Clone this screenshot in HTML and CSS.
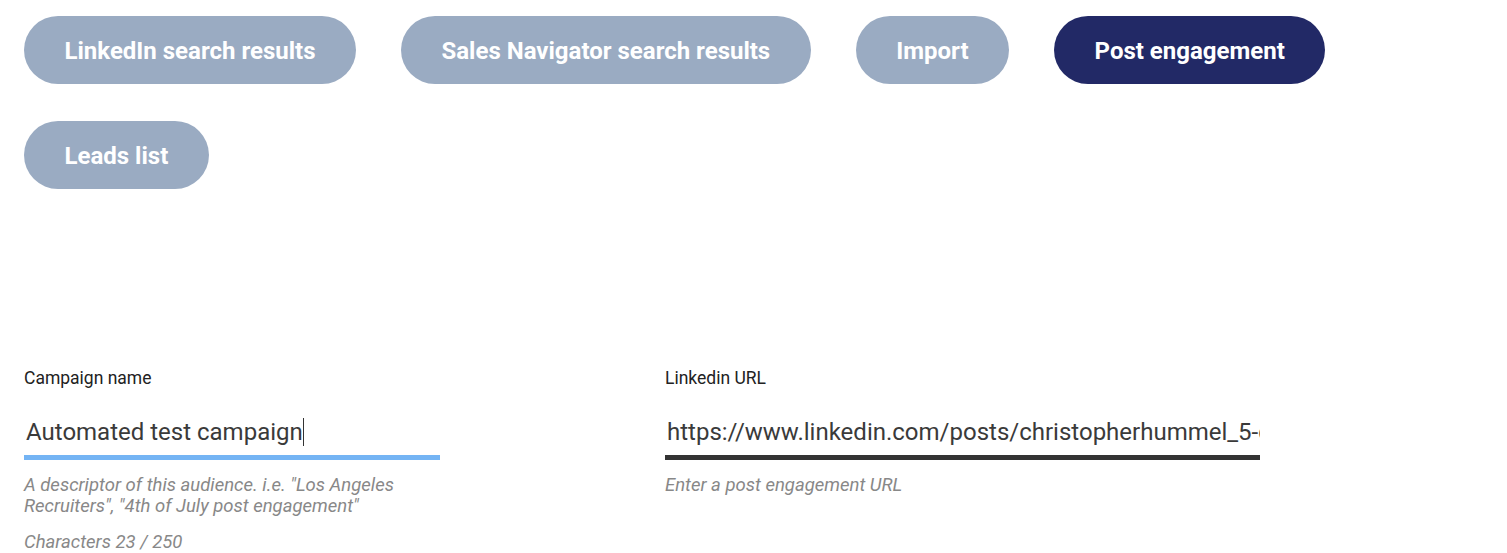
FILE: index.html
```html
<!DOCTYPE html>
<html>
<head>
<meta charset="utf-8">
<link rel="stylesheet" href="styles.css">
</head>
<body>
<div class="page">
  <div class="tabs">
    <button class="tab">LinkedIn search results</button>
    <button class="tab">Sales Navigator search results</button>
    <button class="tab">Import</button>
    <button class="tab active">Post engagement</button>
    <button class="tab">Leads list</button>
  </div>
  <div class="form">
    <div class="field left">
      <div class="label">Campaign name</div>
      <div class="input focused"><span class="value">Automated test campaign</span><span class="caret"></span></div>
      <div class="help">A descriptor of this audience. i.e. "Los Angeles Recruiters", "4th of July post engagement"</div>
      <div class="help count">Characters 23 / 250</div>
    </div>
    <div class="field right">
      <div class="label">Linkedin URL</div>
      <div class="input filled"><span class="value">https://www.linkedin.com/posts/christopherhummel_5-data-driven-tips</span></div>
      <div class="help">Enter a post engagement URL</div>
    </div>
  </div>
</div>
</body>
</html>
```
FILE: styles.css
```css
* { box-sizing: border-box; }
html, body { margin: 0; padding: 0; background: #fff; }
body { font-family: Roboto, "Noto Sans", sans-serif; }
.page { padding: 16px 24px 0 24px; }
.tabs {
  display: flex;
  flex-wrap: wrap;
  column-gap: 45px;
  row-gap: 37px;
  width: 1350px;
}
.tab {
  font-family: Roboto, sans-serif;
  font-weight: 700;
  font-size: 24px;
  color: #fff;
  background: #9aabc2;
  border: none;
  border-radius: 34px;
  height: 68px;
  padding: 2px 40.5px 0 40.5px;
  cursor: pointer;
}
.tab.active { background: #222966; }
.form {
  display: flex;
  margin-top: 179px;
}
.field.left { width: 641px; }
.field.right { width: 595px; }
.label {
  font-size: 17.5px;
  color: #222;
  line-height: 20px;
}
.input {
  margin-top: 21px;
  height: 51px;
  font-size: 24px;
  color: #3a3a3a;
  white-space: nowrap;
  overflow: hidden;
  display: flex;
  align-items: center;
  padding-left: 2px;
  border-bottom: 5px solid #333;
}
.left .input { width: 416px; border-bottom-color: #74b4f4; }
.caret { display: inline-block; width: 1px; height: 28px; background: #333; }
.help {
  margin-top: 15px;
  font-size: 18.5px;
  font-style: italic;
  color: #888;
  line-height: 21px;
  width: 416px;
}
.help.count { margin-top: 15px; }
```
